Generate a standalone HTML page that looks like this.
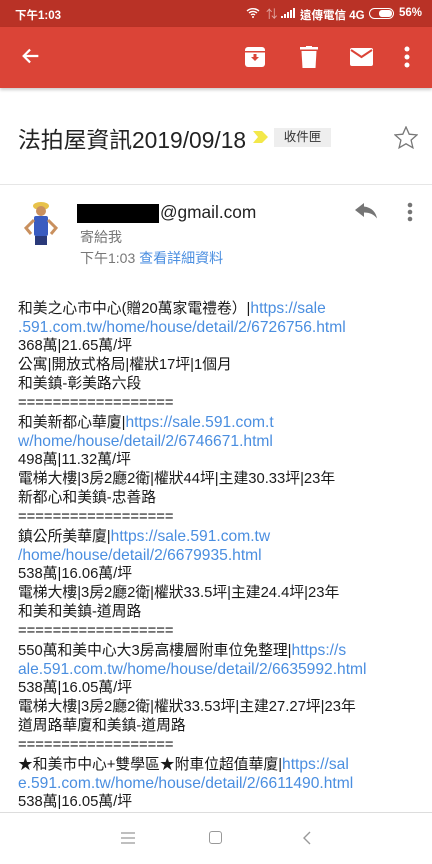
<!DOCTYPE html>
<html><head><meta charset="utf-8"><style>
*{margin:0;padding:0;box-sizing:border-box}
body{width:432px;height:864px;overflow:hidden;background:#fff;font-family:"Liberation Sans","Noto Sans CJK TC",sans-serif;position:relative;color:#222}
.a{position:absolute}
#sb{top:0;left:0;width:432px;height:27px;background:#b93226;color:#fff;font-size:11.5px;font-weight:bold}
#tb{top:27px;left:0;width:432px;height:61px;background:#db4437;box-shadow:0 2px 3px rgba(0,0,0,.2)}
.body{left:18px;top:299px;font-size:14.8px;color:#1a1a1a}
.body div{height:19px;line-height:19px;white-space:nowrap}
.l{color:#4a8ee0;font-size:15.6px;line-height:19px}
</style></head><body>
<div id="sb" class="a">
<span class="a" style="left:15px;top:7px">下午1:03</span>
<svg class="a" style="left:246px;top:7px" width="14" height="11" viewBox="0 0 14 11"><path d="M1 4a9 9 0 0 1 12 0M3 6a6 6 0 0 1 8 0M5 8a3 3 0 0 1 4 0" stroke="#fff" stroke-width="1.4" fill="none"/><circle cx="7" cy="10" r="1" fill="#fff"/></svg>
<span class="a" style="left:266px;top:6px;opacity:.6;font-weight:normal">⇅</span>
<svg class="a" style="left:281px;top:8px" width="14" height="10"><rect x="0" y="8" width="2" height="2" fill="#fff"/><rect x="3" y="6" width="2" height="4" fill="#fff"/><rect x="6" y="4" width="2" height="6" fill="#fff"/><rect x="9" y="2" width="2" height="8" fill="#fff"/><rect x="12" y="0" width="2" height="10" fill="#fff"/></svg>
<span class="a" style="left:300px;top:7px">遠傳電信 4G</span>
<div class="a" style="left:369px;top:8px;width:25px;height:11px;border:1.3px solid #fff;border-radius:6px"><div style="margin:1px 1px 1px auto;width:13px;height:7px;background:#fff;border-radius:3px"></div></div>
<span class="a" style="left:399px;top:7px">56%</span>
</div>
<div id="tb" class="a">
<svg class="a" style="left:20px;top:18px" width="22" height="22" viewBox="0 0 24 24"><path d="M20 12H5M11 5l-7 7 7 7" stroke="#fff" stroke-width="2.4" fill="none"/></svg>
<svg class="a" style="left:244px;top:19px" width="22" height="22" viewBox="0 0 22 22"><rect x="1" y="1" width="20" height="20" rx="3" fill="#fff"/><rect x="1" y="5" width="20" height="1.5" fill="#db4437"/><path d="M7 11l4 4 4-4h-2.5V8h-3v3z" fill="#db4437"/></svg>
<svg class="a" style="left:300px;top:19px" width="18" height="22" viewBox="0 0 18 22"><rect x="0" y="1" width="18" height="2.5" fill="#fff"/><rect x="6" y="0" width="6" height="2" fill="#fff"/><path d="M1.5 5h15l-1 17h-13z" fill="#fff"/></svg>
<svg class="a" style="left:350px;top:21px" width="23" height="18" viewBox="0 0 23 18"><rect width="23" height="18" rx="2" fill="#fff"/><path d="M1 2l10.5 7L22 2" stroke="#db4437" stroke-width="2" fill="none"/></svg>
<svg class="a" style="left:404px;top:19px" width="6" height="22"><circle cx="3" cy="3" r="2.5" fill="#fff"/><circle cx="3" cy="11" r="2.5" fill="#fff"/><circle cx="3" cy="19" r="2.5" fill="#fff"/></svg>
</div>
<div class="a" style="left:18px;top:122px;font-size:22.8px;color:#222">法拍屋資訊2019/09/18</div>
<svg class="a" style="left:253px;top:129px" width="16" height="16" viewBox="0 0 16 16"><path d="M0 2h9l6 6-6 6H0l5-6z" fill="#f3e84a"/></svg>
<div class="a" style="left:274px;top:128px;width:57px;height:19px;background:#eee;font-size:12.5px;line-height:19px;text-align:center;color:#333">收件匣</div>
<svg class="a" style="left:394px;top:126px" width="24" height="23" viewBox="0 0 24 23"><path d="M12 1l3.2 7.2 7.8.7-5.9 5.2 1.8 7.7L12 17.8 5.1 21.8l1.8-7.7L1 8.9l7.8-.7z" stroke="#777" stroke-width="1.3" fill="none"/></svg>
<div class="a" style="left:0;top:184px;width:432px;height:1px;background:#e6e6e6"></div>
<svg class="a" style="left:22px;top:200px" width="38" height="48" viewBox="0 0 38 48"><ellipse cx="19" cy="6" rx="8" ry="4" fill="#e8c24a"/><circle cx="19" cy="11" r="5" fill="#c9905e"/><rect x="12" y="16" width="14" height="20" rx="2" fill="#3a5cc0"/><path d="M12 20l-8 8 5 6M26 20l8 8-5 6" stroke="#c9905e" stroke-width="3" fill="none"/><rect x="13" y="36" width="12" height="9" fill="#2a3a7a"/></svg>
<div class="a" style="left:77px;top:204px;width:82px;height:19px;background:#000"></div>
<div class="a" style="left:160px;top:202px;font-size:17.3px;color:#222">@gmail.com</div>
<div class="a" style="left:80px;top:227px;font-size:14px;color:#777">寄給我</div>
<div class="a" style="left:80px;top:248px;font-size:14px;color:#777">下午1:03 <span style="color:#4a8ee0">查看詳細資料</span></div>
<svg class="a" style="left:354px;top:202px" width="24" height="18" viewBox="0 0 24 18"><path d="M10 1L1 8l9 7v-4.5c6 0 10 2 13 6-1-6-5-11-13-12z" fill="#757575"/></svg>
<svg class="a" style="left:407px;top:202px" width="6" height="20"><circle cx="3" cy="3" r="2.3" fill="#757575"/><circle cx="3" cy="10" r="2.3" fill="#757575"/><circle cx="3" cy="17" r="2.3" fill="#757575"/></svg>
<div class="a body"><div>和美之心市中心(贈20萬家電禮卷）|<span class="l">https://sale</span></div><div><span class="l">.591.com.tw/home/house/detail/2/6726756.html</span></div><div>368萬|21.65萬/坪</div><div>公寓|開放式格局|權狀17坪|1個月</div><div>和美鎮-彰美路六段</div><div>==================</div><div>和美新都心華廈|<span class="l">https://sale.591.com.t</span></div><div><span class="l">w/home/house/detail/2/6746671.html</span></div><div>498萬|11.32萬/坪</div><div>電梯大樓|3房2廳2衛|權狀44坪|主建30.33坪|23年</div><div>新都心和美鎮-忠善路</div><div>==================</div><div>鎮公所美華廈|<span class="l">https://sale.591.com.tw</span></div><div><span class="l">/home/house/detail/2/6679935.html</span></div><div>538萬|16.06萬/坪</div><div>電梯大樓|3房2廳2衛|權狀33.5坪|主建24.4坪|23年</div><div>和美和美鎮-道周路</div><div>==================</div><div>550萬和美中心大3房高樓層附車位免整理|<span class="l">https://s</span></div><div><span class="l">ale.591.com.tw/home/house/detail/2/6635992.html</span></div><div>538萬|16.05萬/坪</div><div>電梯大樓|3房2廳2衛|權狀33.53坪|主建27.27坪|23年</div><div>道周路華廈和美鎮-道周路</div><div>==================</div><div>★和美市中心+雙學區★附車位超值華廈|<span class="l">https://sal</span></div><div><span class="l">e.591.com.tw/home/house/detail/2/6611490.html</span></div><div>538萬|16.05萬/坪</div></div>
<div class="a" style="left:0;top:812px;width:432px;height:52px;background:#fff;border-top:1px solid #ddd;z-index:5">
<svg class="a" style="left:121px;top:19px" width="14" height="12"><path d="M0 1h14M0 6h14M0 11h14" stroke="#999" stroke-width="1.2"/></svg>
<div class="a" style="left:209px;top:18px;width:13px;height:13px;border:1.4px solid #999;border-radius:3px"></div>
<svg class="a" style="left:302px;top:18px" width="9" height="14"><path d="M8 1L2 7l6 6" stroke="#999" stroke-width="1.4" fill="none"/></svg>
</div>
</body></html>
